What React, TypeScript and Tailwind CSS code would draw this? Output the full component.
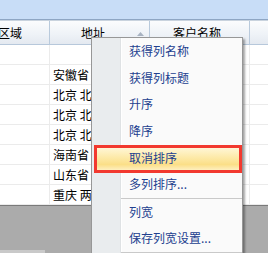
const rows = ["", "安徽省", "北京 北京市", "北京 北京市", "北京 北京市", "海南省", "山东省", "重庆 两江新区"];

const menu = [
  { label: "获得列名称" },
  { label: "获得列标题" },
  { label: "升序" },
  { label: "降序" },
  { label: "取消排序", active: true },
  { label: "多列排序...", sepAfter: true },
  { label: "列宽" },
  { label: "保存列宽设置...", sepAfter: true },
];

const App = () => {
  return (
    <div
      className="relative w-[268px] h-[253px] overflow-hidden bg-white flex flex-col text-[12px] text-black"
      style={{ fontFamily: '"Noto Sans CJK SC", "Noto Sans", sans-serif' }}
    >
      {/* top strip */}
      <div className="h-[19px] shrink-0 bg-[#c8ddf7]" />
      <div className="h-[1px] shrink-0 bg-[#8ea6c4]" />
      <div className="h-[1px] shrink-0 bg-[#c9d3de]" />

      {/* header */}
      <div className="h-[24px] shrink-0 grid grid-cols-[50px_100px_100px_1fr] bg-[linear-gradient(#fbfcfd,#eef2f7_60%,#e4e9f0)] border-b border-[#b7c8db]">
        <div className="flex items-center border-r border-[#b9cadc]">
          <span className="-ml-[2px]">区域</span>
        </div>
        <div className="relative flex items-center pl-[31px] border-r border-[#b9cadc]">
          <span>地址</span>
          <svg className="absolute left-[87px] top-[11px]" width="7" height="4" viewBox="0 0 7 4">
            <path d="M3.5 0 L7 4 L0 4 Z" fill="#a8b3c2" />
          </svg>
        </div>
        <div className="flex items-center pl-[23px] border-r border-[#b9cadc]">
          <span>客户名称</span>
        </div>
        <div />
      </div>

      {/* rows */}
      {rows.map((r, i) => (
        <div key={i} className="h-[20px] shrink-0 grid grid-cols-[50px_100px_100px_1fr] border-b border-[#ebebeb]">
          <div className="border-r border-[#ebebeb]" />
          <div className="flex items-center pl-[3px] whitespace-nowrap overflow-hidden border-r border-[#ebebeb]">{r}</div>
          <div className="border-r border-[#ebebeb]" />
          <div />
        </div>
      ))}

      {/* empty area */}
      <div className="flex-1 flex flex-col bg-[#ababab] border-t border-[#7a7a7a]">
        <div className="flex-1" />
        <div className="h-[3px] w-[45px] bg-[#c9c9c9]" />
      </div>

      {/* context menu */}
      <div className="absolute left-[91px] top-[37px] w-[152px] h-[230px] border border-[#979797] shadow-[2px_2px_2px_rgba(0,0,0,0.35)] bg-[linear-gradient(to_right,#e9ecee_28px,#dfe2e4_28px,#dfe2e4_29px,#ffffff_29px,#ffffff_30px,#fafafa_30px)]">
        {menu.map((m, i) => (
          <div key={i}>
            <div className="relative h-[26.6px] flex items-center pl-[37px] text-[#22408f]">
              {m.active && (
                <div className="absolute left-[2px] right-0 top-[1px] -bottom-[2px] border-[3px] border-[#f2392f] bg-[linear-gradient(#fff6d6,#fde9a6_45%,#fbdf88_75%,#feefbf)]" />
              )}
              <span className="relative">{m.label}</span>
            </div>
            {m.sepAfter && <div className="ml-[29px] h-[1px] bg-[#c9c9c9]" />}
          </div>
        ))}
      </div>
    </div>
  );
};

export default App;
